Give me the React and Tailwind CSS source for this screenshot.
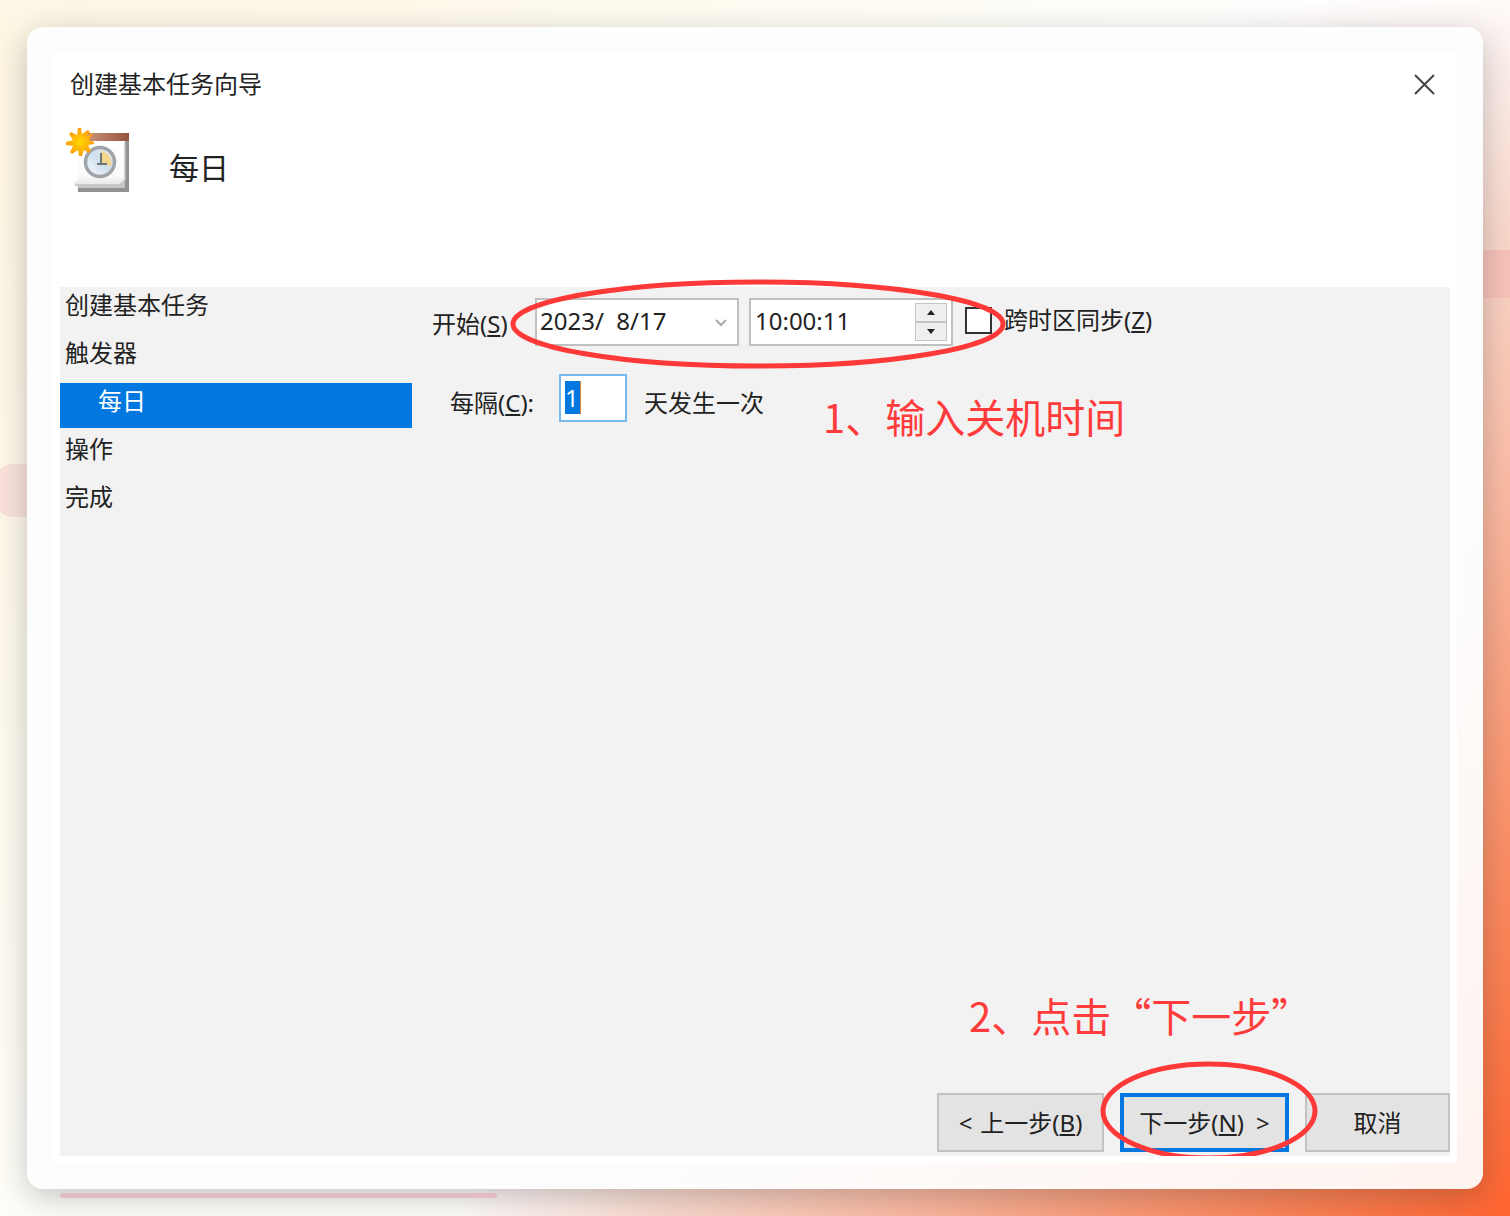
import React, { useState } from "react";

const steps = [
    { label: "创建基本任务" },
    { label: "触发器" },
    { label: "每日", active: true },
    { label: "操作" },
    { label: "完成" },
];

function TaskIcon() {
    return (
        <svg className="h-[66px] w-[66px]" viewBox="0 0 66 66" aria-hidden="true">
            <defs>
                <linearGradient id="paper" x1="0" y1="0" x2="0" y2="1">
                    <stop offset="0" stopColor="#ffffff" />
                    <stop offset="0.8" stopColor="#fafafa" />
                    <stop offset="1" stopColor="#e6e6e6" />
                </linearGradient>
                <linearGradient id="top" x1="0" y1="0" x2="1" y2="0">
                    <stop offset="0" stopColor="#cf9780" />
                    <stop offset="1" stopColor="#94553f" />
                </linearGradient>
                <linearGradient id="face" x1="1" y1="0" x2="0" y2="1">
                    <stop offset="0" stopColor="#e6edf3" />
                    <stop offset="0.5" stopColor="#cfdfec" />
                    <stop offset="1" stopColor="#ffffff" />
                </linearGradient>
                <radialGradient id="sun">
                    <stop offset="0" stopColor="#ffd800" />
                    <stop offset="0.6" stopColor="#ffb50a" />
                    <stop offset="1" stopColor="#ff9d0a" />
                </radialGradient>
            </defs>
            <path d="M13 9H64V64H13V58Z" fill="#929292" />
            <path d="M9 54H60V60H14Z" fill="#c8c8c8" />
            <path d="M13 12H60V52L55 57H9Q13 52 13 46Z" fill="url(#paper)" />
            <path d="M60 14V52L55 57H10" fill="none" stroke="#c4c4c4" strokeWidth="1.5" />
            <path d="M18 5H64V13H18Z" fill="url(#top)" />
            <circle cx="35" cy="34" r="14.5" fill="url(#face)" stroke="#9fa4a8" strokeWidth="3.5" />
            <path d="M36 23A12 12 0 0 1 46 38L36 36Z" fill="#f3d58c" />
            <path d="M36 25V36H42M36 36H32" fill="none" stroke="#6d7678" strokeWidth="2" />
            <path
                d="M13 0H16L17 6L23 2L25 4L21 9L29 4L24 12L29 14V16L23 17L26 23L24 25L19 22L17 28H14L13 22L7 26L5 24L8 18L1 17V14L8 12L4 6L6 4L12 7Z"
                fill="url(#sun)"
            />
        </svg>
    );
}

export default function App() {
    const [date, setDate] = useState("2023/  8/17");
    const [time, setTime] = useState("10:00:11");
    const [days, setDays] = useState("1");
    const [sync, setSync] = useState(false);

    return (
        <div className="relative flex min-h-screen flex-col overflow-hidden bg-[radial-gradient(ellipse_70%_102%_at_100%_100%,#ff6530_0%,#fc8153_20%,#fb9e7b_40%,#fbbda6_60%,#fad9cc_80%,#fdf0ec_93%,#ffffff00_100%),radial-gradient(ellipse_90%_120%_at_0%_10%,#fff6e3_0%,#fffdf6_70%,#ffffff_100%)] p-[27px] font-['Noto_Sans','Noto_Sans_CJK_SC',sans-serif] text-2xl text-[#222]">
            {/* Background decoration */}
            <div className="absolute top-[464px] -left-1 h-[53px] w-16 rounded-2xl bg-[#fbe2db]" />
            <div className="absolute top-[250px] right-0 h-12 w-10 bg-[#f9c2b8]" />

            <main className="relative flex flex-1 flex-col rounded-2xl bg-linear-to-br from-[#fdfdfd] from-70% to-[#fff3ef] p-[26px] shadow-[0_8px_32px_rgba(40,50,60,0.28)]">
                <div className="flex flex-1 flex-col border-[7px] border-white bg-[#f2f2f2]">
                    <header className="h-[227px] bg-white">
                        <div className="flex h-12 items-center justify-between pr-3 pl-[10px]">
                            <h1>创建基本任务向导</h1>
                            <button type="button" aria-label="关闭" className="p-[3px]">
                                <svg className="h-[21px] w-[21px]" viewBox="0 0 21 21" fill="none" stroke="#444" strokeWidth="2">
                                    <path d="M1 1L20 20M20 1L1 20" />
                                </svg>
                            </button>
                        </div>
                        <div className="flex gap-[38px] pt-5 pl-[5px]">
                            <TaskIcon />
                            <h2 className="pt-4 text-3xl leading-[48px]">每日</h2>
                        </div>
                    </header>

                    <div className="flex flex-1">
                        <nav className="flex w-[352px] flex-col gap-[3px]">
                            {steps.map((step) => (
                                <a
                                    key={step.label}
                                    href="#"
                                    className={
                                        step.active
                                            ? "h-[45px] bg-[#0078df] pl-[38px] leading-9 text-white"
                                            : "h-[45px] pl-[5px] leading-9"
                                    }
                                >
                                    {step.label}
                                </a>
                            ))}
                        </nav>

                        <section className="relative flex flex-1 flex-col pt-[11px] pl-5">
                            <div className="flex items-start">
                                <label htmlFor="start" className="w-[103px] pt-2 leading-9">
                                    开始(<u>S</u>)
                                </label>
                                <div className="flex h-12 w-[204px] items-center border-2 border-[#c0c0c0] bg-white pr-2 pl-[3px]">
                                    <input
                                        id="start"
                                        value={date}
                                        onChange={(e) => setDate(e.target.value)}
                                        className="w-0 flex-1 pb-[2px] whitespace-pre outline-none"
                                    />
                                    <button type="button" aria-label="选择日期">
                                        <svg className="h-4 w-4" viewBox="0 0 16 16" fill="none" stroke="#aaa" strokeWidth="2">
                                            <path d="M3 6L8 11L13 6" />
                                        </svg>
                                    </button>
                                </div>
                                <div className="ml-[10px] flex h-12 w-[204px] items-center border-2 border-[#c0c0c0] bg-white pr-1 pl-[4px]">
                                    <input
                                        aria-label="时间"
                                        value={time}
                                        onChange={(e) => setTime(e.target.value)}
                                        className="w-0 flex-1 pb-[2px] outline-none"
                                    />
                                    <div className="flex w-8 flex-col">
                                        <button type="button" aria-label="增加" className="flex h-[19px] items-center justify-center border border-[#c4c4c4] bg-[#efefef]">
                                            <svg className="h-[5px] w-2" viewBox="0 0 8 5"><path d="M0 5L4 0L8 5Z" fill="#222" /></svg>
                                        </button>
                                        <button type="button" aria-label="减少" className="flex h-[19px] items-center justify-center border border-[#c4c4c4] bg-[#efefef]">
                                            <svg className="h-[5px] w-2" viewBox="0 0 8 5"><path d="M0 0L4 5L8 0Z" fill="#222" /></svg>
                                        </button>
                                    </div>
                                </div>
                                <label className="ml-3 flex items-center gap-3 pt-1 leading-9">
                                    <input
                                        type="checkbox"
                                        checked={sync}
                                        onChange={(e) => setSync(e.target.checked)}
                                        className="h-[27px] w-[27px] appearance-none border-2 border-[#333] bg-white checked:bg-[#0078df]"
                                    />
                                    <span>跨时区同步(<u>Z</u>)</span>
                                </label>
                            </div>

                            <div className="mt-7 flex items-start pl-[18px]">
                                <label htmlFor="days" className="w-[109px] pt-[11px] leading-9">
                                    每隔(<u>C</u>):
                                </label>
                                <div className="flex h-12 w-[68px] items-start border-2 border-[#76b9ed] bg-white pt-[5px] pl-1">
                                    <input
                                        id="days"
                                        value={days}
                                        onChange={(e) => setDays(e.target.value)}
                                        className="h-[33px] w-4 border-r border-[#e0883c] bg-[#0078df] text-white outline-none"
                                    />
                                </div>
                                <span className="pt-[11px] pl-[17px] leading-9">天发生一次</span>
                                <p className="pt-3 pl-[59px] font-['Noto_Sans_CJK_SC',sans-serif] text-[40px] leading-[60px] text-[#ff3b3b]">
                                    1、输入关机时间
                                </p>
                            </div>

                            {/* Marker round date and time */}
                            <svg className="pointer-events-none absolute -top-2 left-[98px] h-[90px] w-[496px]" viewBox="0 0 496 90" fill="none">
                                <ellipse cx="248" cy="45" rx="245" ry="42" stroke="#ff3838" strokeWidth="5" />
                            </svg>
                        </section>
                    </div>

                    <footer className="flex flex-col items-end">
                        <p className="w-[481px] pb-12 font-['Noto_Sans_CJK_SC',sans-serif] text-[40px] leading-[60px] text-[#ff3b3b]">
                            2、点击“下一步”
                        </p>
                        <div className="flex gap-4 pb-1">
                            <button type="button" className="flex h-[59px] w-[167px] items-center justify-center gap-2 border-2 border-[#c2c2c2] bg-[#e3e3e3]">
                                <span>&lt;</span>
                                <span>上一步(<u>B</u>)</span>
                            </button>
                            <div className="relative">
                                <button type="button" className="flex h-[59px] w-[169px] items-center justify-center gap-3 border-4 border-[#0078df] bg-[#e3e3e3]">
                                    <span>下一步(<u>N</u>)</span>
                                    <span>&gt;</span>
                                </button>
                                {/* Marker round the next button */}
                                <svg className="pointer-events-none absolute -top-8 -left-5 h-[95px] w-[218px]" viewBox="0 0 218 95" fill="none">
                                    <ellipse cx="109" cy="50" rx="106" ry="47" stroke="#ff3838" strokeWidth="5" />
                                </svg>
                            </div>
                            <button type="button" className="h-[59px] w-[145px] border-2 border-[#c2c2c2] bg-[#e3e3e3]">
                                取消
                            </button>
                        </div>
                    </footer>
                </div>
            </main>

            <div className="absolute bottom-[18px] left-[60px] h-[5px] w-[437px] rounded-full bg-[#e2bcc0]" />
        </div>
    );
}
